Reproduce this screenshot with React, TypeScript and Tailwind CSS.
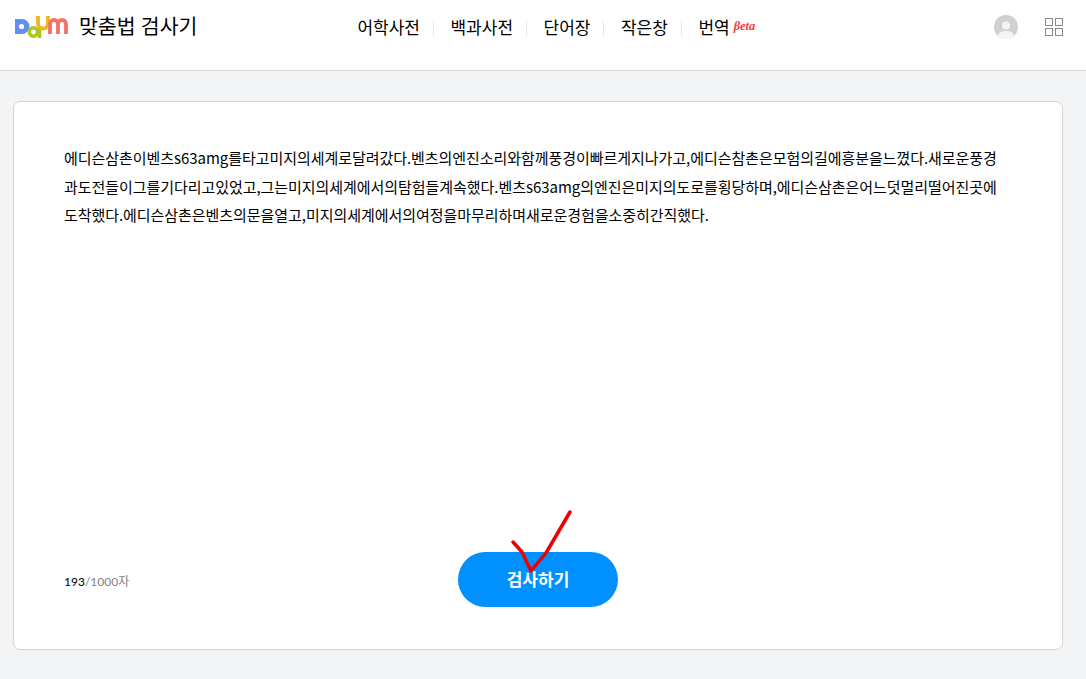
const cjk = "font-['Lato','Noto_Sans_CJK_KR',sans-serif]";

function Logo() {
  return (
    <svg width="54" height="22" viewBox="0 0 54 22" className="block shrink-0">
      <path d="M0 3h7a7.5 7.5 0 0 1 0 15H0z" fill="#5f8ff5" />
      <circle cx="6.5" cy="10.5" r="2.6" fill="#fff" />
      <circle cx="18.5" cy="16" r="4.2" fill="none" stroke="#a9c81f" strokeWidth="3.6" />
      <path d="M24.5 10v12" stroke="#a9c81f" strokeWidth="3.6" />
      <path d="M23 0v7.5a5 5 0 0 0 10 0V0" fill="none" stroke="#f7b51c" strokeWidth="3.8" />
      <path d="M35 18V8a4 4 0 0 1 8 0v10M43 8a4 4 0 0 1 8 0v10" fill="none" stroke="#f4716a" strokeWidth="3.8" />
    </svg>
  );
}

function NavItem({ label }: { label: string }) {
  return (
    <>
      <a className="text-[17px] text-black">{label}</a>
      <span className="mr-[16.5px] ml-[13px] h-[15px] w-[1px] bg-[#e3e5ea]" />
    </>
  );
}

export default function App() {
  return (
    <div className={`${cjk} flex h-[679px] flex-col overflow-hidden bg-[#f3f4f6] text-black`}>
      {/* Header */}
      <header className="relative flex h-[71px] shrink-0 items-start border-b border-[#d8d9dc] bg-white">
        <div className="flex items-center pl-[15px] pt-[16px]">
          <Logo />
          <h1 className="ml-[10px] -translate-y-[1px] text-[20.5px] leading-[22px] font-normal">맞춤법 검사기</h1>
        </div>
        <nav className="ml-[160px] flex items-center pt-[17px] leading-[22px]">
          <NavItem label="어학사전" />
          <NavItem label="백과사전" />
          <NavItem label="단어장" />
          <NavItem label="작은창" />
          <a className="text-[17px] text-black">번역</a>
          <span className="ml-[4px] -translate-y-[2px] font-['Liberation_Serif',serif] text-[12.5px] font-bold text-[#f4403c] italic">βeta</span>
        </nav>
        <div className="ml-auto flex items-center pt-[15px] pr-[23px]">
          <svg width="24" height="24" viewBox="0 0 24 24">
            <circle cx="12" cy="12" r="12" fill="#d0d0d0" />
            <circle cx="12" cy="10.5" r="4" fill="#f4f4f4" />
            <path d="M4 21.5c0-4 3.5-5.5 8-5.5s8 1.5 8 5.5a12 12 0 0 1-16 0z" fill="#f4f4f4" />
          </svg>
          <div className="ml-[27px] grid grid-cols-2 gap-[2px]">
            <span className="size-[8px] border border-[#8a8a8a]" />
            <span className="size-[8px] border border-[#8a8a8a]" />
            <span className="size-[8px] border border-[#8a8a8a]" />
            <span className="size-[8px] border border-[#8a8a8a]" />
          </div>
        </div>
      </header>

      {/* Editor card */}
      <main className="px-[13px] pt-[30px]">
        <section className="relative flex h-[549px] w-[1050px] flex-col justify-between rounded-[7px] border border-[#d4d4d4] bg-white pt-[42px] pr-[60px] pb-[42px] pl-[50px]">
          <p className="font-['Noto_Sans_CJK_KR',sans-serif] text-[15px] leading-[28.5px] tracking-[-0.05px] text-black">
            에디슨삼촌이벤츠s63amg를타고미지의세계로달려갔다.벤츠의엔진소리와함께풍경이빠르게지나가고,에디슨참촌은모험의길에흥분을느꼈다.새로운풍경과도전들이그를기다리고있었고,그는미지의세계에서의탐험들계속했다.벤츠s63amg의엔진은미지의도로를횡당하며,에디슨삼촌은어느덧멀리떨어진곳에도착했다.에디슨삼촌은벤츠의문을열고,미지의세계에서의여정을마무리하며새로운경험을소중히간직했다.
          </p>
          <div className="relative flex items-center justify-center">
            <span className="absolute top-[21px] left-0 text-[12px] text-[#7f7f7f]">
              <span className="text-black">193</span>/1000자
            </span>
            <button className="ml-[10px] h-[55px] w-[160px] rounded-full bg-[#0090ff] text-[17px] font-bold text-white">
              검사하기
            </button>
          </div>
          {/* hand drawn check mark */}
          <svg className="pointer-events-none absolute -top-[1px] -left-[1px]" width="1050" height="549" viewBox="13 101 1050 549">
            <polyline
              points="513,542 522,552 531,571 546,553 570,512"
              fill="none"
              stroke="#f00000"
              strokeWidth="3.5"
              strokeLinecap="round"
              strokeLinejoin="round"
            />
          </svg>
        </section>
      </main>
    </div>
  );
}
